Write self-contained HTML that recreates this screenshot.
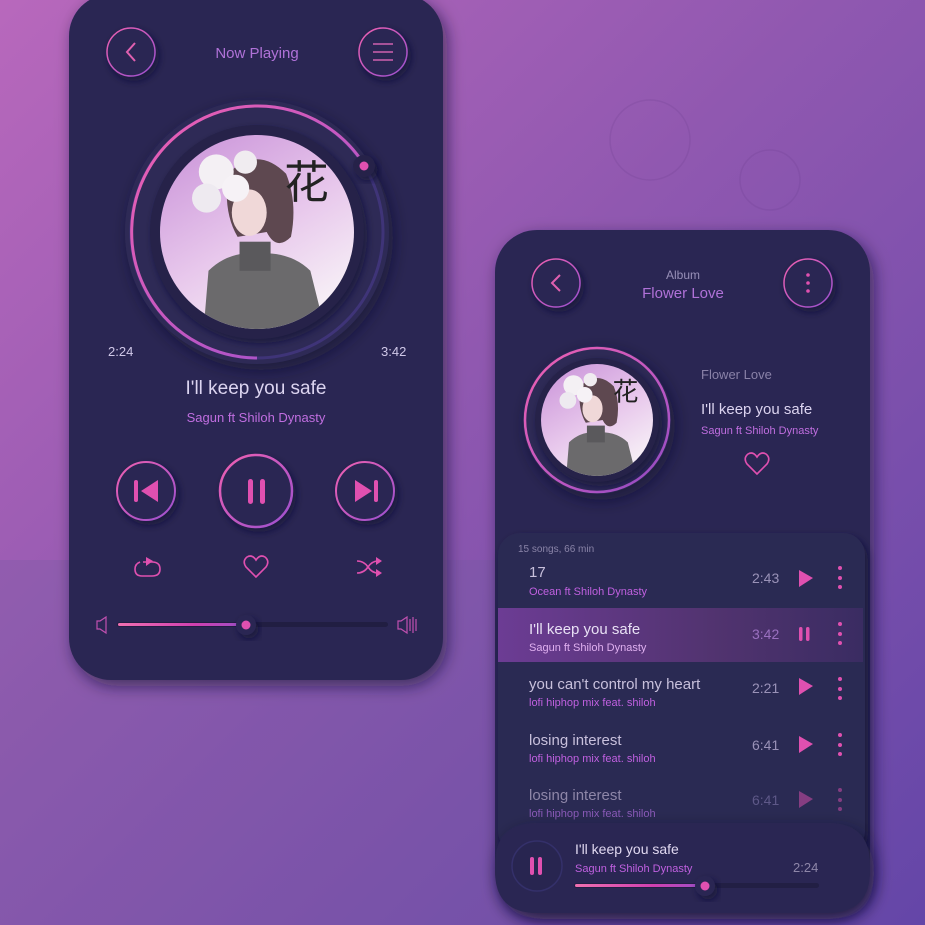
<!DOCTYPE html>
<html><head><meta charset="utf-8"><style>
html,body{margin:0;padding:0;width:925px;height:925px;overflow:hidden;background:#8a55b0}
svg{display:block}
text{font-family:"Liberation Sans","Noto Sans CJK SC",sans-serif}
</style></head><body>
<svg width="925" height="925" viewBox="0 0 925 925" xmlns="http://www.w3.org/2000/svg">
<defs>
<linearGradient id="bg" x1="0" y1="0" x2="1" y2="1">
<stop offset="0" stop-color="#b868bc"/><stop offset="0.45" stop-color="#9058b0"/><stop offset="1" stop-color="#6446a8"/>
</linearGradient>
<linearGradient id="pk" x1="0" y1="0" x2="1" y2="1">
<stop offset="0" stop-color="#f060b0"/><stop offset="1" stop-color="#9a50d0"/>
</linearGradient>
<linearGradient id="pkh" x1="0" y1="0" x2="1" y2="0">
<stop offset="0" stop-color="#f070b0"/><stop offset="0.6" stop-color="#d040b0"/><stop offset="1" stop-color="#9a50c8"/>
</linearGradient>
<linearGradient id="art" x1="0" y1="0" x2="0.6" y2="1">
<stop offset="0" stop-color="#c890d8"/><stop offset="0.6" stop-color="#e8c8ec"/><stop offset="1" stop-color="#f6eef6"/>
</linearGradient>
<linearGradient id="hl" x1="0" y1="0" x2="1" y2="0">
<stop offset="0" stop-color="#6c3c94"/><stop offset="0.6" stop-color="#51336f"/><stop offset="1" stop-color="#3a2c62"/>
</linearGradient>
<filter id="sh" x="-20%" y="-20%" width="140%" height="140%"><feDropShadow dx="4" dy="6" stdDeviation="8" flood-color="#15122e" flood-opacity="0.6"/></filter>
<filter id="sh2" x="-30%" y="-30%" width="160%" height="160%"><feDropShadow dx="3" dy="4" stdDeviation="4" flood-color="#141230" flood-opacity="0.7"/></filter>
<clipPath id="c1"><circle cx="257" cy="232" r="97"/></clipPath>
<clipPath id="c2"><circle cx="597" cy="420" r="56"/></clipPath>
<g id="artg">
<rect x="-100" y="-100" width="200" height="200" fill="url(#art)"/>
<path d="M-55 100 L-50 40 Q-30 20 0 22 Q35 20 55 40 L70 100 Z" fill="#6b6a6c"/>
<rect x="-18" y="10" width="32" height="30" fill="#5a595c"/>
<path d="M-30 -60 Q0 -90 30 -60 Q42 -30 35 5 Q20 20 10 0 L-20 5 Q-35 -20 -30 -60Z" fill="#5e4850"/>
<ellipse cx="-8" cy="-20" rx="18" ry="24" fill="#f0d8d8"/>
<circle cx="-42" cy="-62" r="18" fill="#f4f0f4"/><circle cx="-52" cy="-35" r="15" fill="#eeeaf0"/><circle cx="-22" cy="-45" r="14" fill="#f6f2f6"/><circle cx="-12" cy="-72" r="12" fill="#f0ecf0"/>
<text x="28" y="-35" font-size="46" fill="#222" font-family="Noto Sans CJK SC,sans-serif">花</text>
</g>
</defs>
<rect width="925" height="925" fill="url(#bg)"/>
<g fill="none" stroke="#6a3a8a" stroke-opacity="0.2" stroke-width="1.5">
<circle cx="650" cy="140" r="40"/><circle cx="770" cy="180" r="30"/>
</g>
<rect x="0" y="560" width="520" height="365" fill="#6e5a9e" opacity="0.25"/>

<!-- LEFT CARD -->
<rect x="69" y="-6" width="374" height="686" rx="42" fill="#2b2852" filter="url(#sh)"/>
<circle cx="131" cy="52" r="25" fill="#2b2852" filter="url(#sh2)"/>
<circle cx="131" cy="52" r="24" fill="none" stroke="url(#pk)" stroke-width="1.5"/>
<path d="M135 43 L127 52 L135 61" fill="none" stroke="#e060b0" stroke-width="2"/>
<circle cx="383" cy="52" r="25" fill="#2b2852" filter="url(#sh2)"/>
<circle cx="383" cy="52" r="24" fill="none" stroke="url(#pk)" stroke-width="1.5"/>
<path d="M373 44h20M373 52h20M373 60h20" stroke="#d060b0" stroke-width="1.6"/>
<text x="257" y="58" text-anchor="middle" font-size="15" fill="#b072d8">Now Playing</text>

<circle cx="257" cy="232" r="132" fill="#2d2a56" filter="url(#sh)"/>
<circle cx="257" cy="232" r="126" fill="none" stroke="#3f3478" stroke-width="3"/>
<path d="M365 166 A126 126 0 1 0 257 358" fill="none" stroke="url(#pk)" stroke-width="3"/>
<circle cx="257" cy="232" r="107" fill="#252248" filter="url(#sh2)"/>
<g clip-path="url(#c1)"><use href="#artg" transform="translate(257,232) scale(0.97)"/></g>
<circle cx="364" cy="166" r="11" fill="#26234a" filter="url(#sh2)"/>
<circle cx="364" cy="166" r="4.5" fill="#e050b0"/>
<text x="108" y="356" font-size="13" fill="#d0c8e8">2:24</text>
<text x="381" y="356" font-size="13" fill="#d0c8e8">3:42</text>
<text x="256" y="394" text-anchor="middle" font-size="19" fill="#dcd4f0">I'll keep you safe</text>
<text x="256" y="422" text-anchor="middle" font-size="13" fill="#c06ee0">Sagun ft Shiloh Dynasty</text>

<circle cx="146" cy="491" r="30" fill="#2b2852" filter="url(#sh2)"/>
<circle cx="146" cy="491" r="29" fill="none" stroke="url(#pk)" stroke-width="2"/>
<rect x="134" y="480" width="4" height="22" rx="2" fill="#e050b0"/><path d="M158 480 L141 491 L158 502Z" fill="#e050b0"/>
<circle cx="256" cy="491" r="37" fill="#2b2852" filter="url(#sh2)"/>
<circle cx="256" cy="491" r="36" fill="none" stroke="url(#pk)" stroke-width="2.5"/>
<rect x="248" y="479" width="5" height="25" rx="2.5" fill="#e050b0"/><rect x="260" y="479" width="5" height="25" rx="2.5" fill="#e050b0"/>
<circle cx="365" cy="491" r="30" fill="#2b2852" filter="url(#sh2)"/>
<circle cx="365" cy="491" r="29" fill="none" stroke="url(#pk)" stroke-width="2"/>
<path d="M355 480 L372 491 L355 502Z" fill="#e050b0"/><rect x="374" y="480" width="4" height="22" rx="2" fill="#e050b0"/>

<path d="M143 562 H152 Q160 562 160 569 Q160 576 152 576 H142 Q135 576 135 569 Q135 564 140 562" fill="none" stroke="#e050b0" stroke-width="1.6"/>
<path d="M146 557 L153 561 L146 566Z" fill="#e050b0"/>
<path d="M256 577 L246 567 Q242 561 247 557 Q252 554 256 560 Q260 554 265 557 Q270 561 266 567Z" fill="none" stroke="#e050b0" stroke-width="1.6"/>
<path d="M357 561 Q364 561 368 567 Q372 573 378 573 M357 573 Q364 573 368 567 Q372 561 378 561" fill="none" stroke="#e050b0" stroke-width="1.6"/>
<path d="M376 557 L382 561 L376 565Z M376 569 L382 573 L376 577Z" fill="#e050b0"/>

<path d="M97 621 h3 l6 -4 v16 l-6 -4 h-3z" fill="none" stroke="#c050b0" stroke-width="1.2"/>
<rect x="117" y="622" width="271" height="5" rx="2.5" fill="#211e42"/>
<rect x="118" y="623" width="128" height="3" rx="1.5" fill="url(#pkh)"/>
<circle cx="246" cy="625" r="10" fill="#2b2852" filter="url(#sh2)"/>
<circle cx="246" cy="625" r="4.5" fill="#e050b0"/>
<path d="M398 621 h3 l6 -4 v16 l-6 -4 h-3z M410 619v12 M413 617v16 M416 619v12" fill="none" stroke="#c050b0" stroke-width="1.2"/>

<!-- RIGHT CARD -->
<rect x="495" y="230" width="375" height="683" rx="42" fill="#2b2852" filter="url(#sh)"/>
<circle cx="556" cy="283" r="25" fill="#2b2852" filter="url(#sh2)"/>
<circle cx="556" cy="283" r="24" fill="none" stroke="url(#pk)" stroke-width="1.5"/>
<path d="M560 275 L552 283 L560 291" fill="none" stroke="#e060b0" stroke-width="2"/>
<circle cx="808" cy="283" r="25" fill="#2b2852" filter="url(#sh2)"/>
<circle cx="808" cy="283" r="24" fill="none" stroke="url(#pk)" stroke-width="1.5"/>
<circle cx="808" cy="275" r="1.8" fill="#e050b0"/><circle cx="808" cy="283" r="1.8" fill="#e050b0"/><circle cx="808" cy="291" r="1.8" fill="#e050b0"/>
<text x="683" y="279" text-anchor="middle" font-size="12" fill="#9890b8">Album</text>
<text x="683" y="298" text-anchor="middle" font-size="15" fill="#b072d8">Flower Love</text>

<circle cx="597" cy="420" r="74" fill="#2d2a56" filter="url(#sh)"/>
<circle cx="597" cy="420" r="72" fill="none" stroke="url(#pk)" stroke-width="2.5"/>
<circle cx="597" cy="420" r="62" fill="#252248" filter="url(#sh2)"/>
<g clip-path="url(#c2)"><use href="#artg" transform="translate(597,420) scale(0.56)"/></g>
<text x="701" y="379" font-size="13" fill="#8a82a8">Flower Love</text>
<text x="701" y="414" font-size="15" fill="#dcd4f0">I'll keep you safe</text>
<text x="701" y="434" font-size="11" fill="#c06ee0">Sagun ft Shiloh Dynasty</text>
<path d="M757 474 L747 464 Q743 458 748 454 Q753 451 757 457 Q761 451 766 454 Q771 458 767 464Z" fill="none" stroke="#e050b0" stroke-width="1.6"/>

<rect x="498" y="533" width="367" height="320" rx="22" fill="#2c2953" filter="url(#sh2)"/>
<text x="518" y="552" font-size="10" fill="#8a84a8">15 songs, 66 min</text>
<rect x="498" y="608" width="365" height="54" fill="url(#hl)"/>
<g font-size="15" fill="#c8c0dc">
<text x="529" y="577">17</text>
<text x="529" y="634" fill="#e8e0f4">I'll keep you safe</text>
<text x="529" y="689">you can't control my heart</text>
<text x="529" y="745">losing interest</text>
<text x="529" y="800" fill="#8e86a8">losing interest</text>
</g>
<g font-size="11" fill="#c060e0">
<text x="529" y="595">Ocean ft Shiloh Dynasty</text>
<text x="529" y="651" fill="#e0b0f0">Sagun ft Shiloh Dynasty</text>
<text x="529" y="706">lofi hiphop mix feat. shiloh</text>
<text x="529" y="762">lofi hiphop mix feat. shiloh</text>
<text x="529" y="817" fill="#8a5ab8">lofi hiphop mix feat. shiloh</text>
</g>
<g font-size="14" fill="#9a92b8">
<text x="752" y="583">2:43</text><text x="752" y="639" fill="#9a70c0">3:42</text><text x="752" y="693">2:21</text><text x="752" y="750">6:41</text><text x="752" y="805" fill="#5e5888">6:41</text>
</g>
<g fill="#e050b0">
<path d="M799 570 L813 578 L799 587Z"/>
<rect x="799" y="627" width="3.5" height="14" rx="1.7"/><rect x="806" y="627" width="3.5" height="14" rx="1.7"/>
<path d="M799 678 L813 686 L799 695Z"/><path d="M799 736 L813 744 L799 753Z"/>
<path d="M799 791 L813 799 L799 808Z" opacity="0.5"/>
<circle cx="840" cy="568" r="2"/><circle cx="840" cy="578" r="2"/><circle cx="840" cy="587" r="2"/>
<circle cx="840" cy="624" r="2"/><circle cx="840" cy="634" r="2"/><circle cx="840" cy="643" r="2"/>
<circle cx="840" cy="679" r="2"/><circle cx="840" cy="689" r="2"/><circle cx="840" cy="698" r="2"/>
<circle cx="840" cy="735" r="2"/><circle cx="840" cy="745" r="2"/><circle cx="840" cy="754" r="2"/>
<g opacity="0.5"><circle cx="840" cy="790" r="2"/><circle cx="840" cy="800" r="2"/><circle cx="840" cy="809" r="2"/></g>
</g>

<path d="M495 865 Q495 823 537 823 H828 Q870 823 870 865 V871 Q870 913 828 913 H537 Q495 913 495 871Z" fill="#2b2852" filter="url(#sh)"/>
<circle cx="537" cy="866" r="25" fill="#282550" stroke="#34306a" stroke-width="1.5"/>
<rect x="530" y="857" width="4" height="18" rx="2" fill="#e050b0"/><rect x="538" y="857" width="4" height="18" rx="2" fill="#e050b0"/>
<text x="575" y="854" font-size="14" fill="#e0d8f0">I'll keep you safe</text>
<text x="575" y="872" font-size="11" fill="#c060e0">Sagun ft Shiloh Dynasty</text>
<text x="793" y="872" font-size="13" fill="#8e86a8">2:24</text>
<rect x="574" y="883" width="245" height="5" rx="2.5" fill="#221f44"/>
<rect x="575" y="884" width="130" height="3" rx="1.5" fill="url(#pkh)"/>
<circle cx="705" cy="886" r="10" fill="#2b2852" filter="url(#sh2)"/>
<circle cx="705" cy="886" r="4.5" fill="#e050b0"/>
</svg>
</body></html>
